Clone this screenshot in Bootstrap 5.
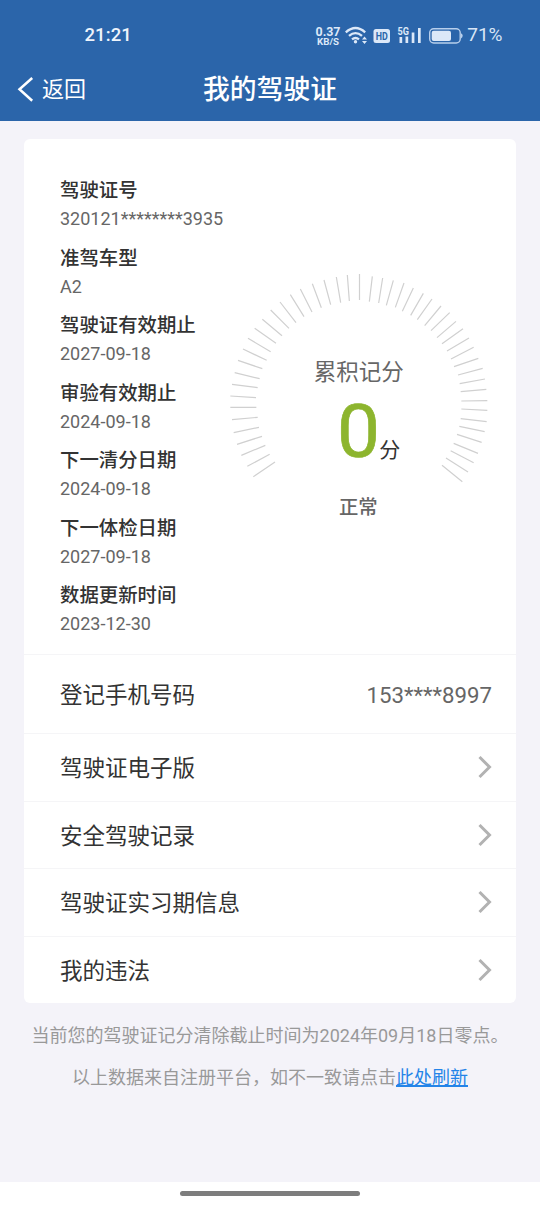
<!DOCTYPE html>
<html lang="zh-CN">
<head>
<meta charset="utf-8">
<meta name="viewport" content="width=device-width, initial-scale=1">
<title>我的驾驶证</title>
<link href="https://cdn.jsdelivr.net/npm/bootstrap@5.3.0/dist/css/bootstrap.min.css" rel="stylesheet">
<style>
  body { font-family: Roboto, "Noto Sans CJK SC", sans-serif; background: #f4f3f9; color: #333; height: 1206px; overflow: hidden; }
  svg { display: block; flex: none; }
  svg text { font-family: Roboto, "Noto Sans CJK SC", sans-serif; }
  .app-head { background: #2b65aa; height: 121px; }
  .status-row { height: 71px; padding-left: 84.5px; padding-right: 37.5px; color: #eef4fc; }
  .clock { font-size: 18.5px; font-weight: 500; letter-spacing: .1px; }
  .battery-pct { font-size: 19px; color: #d9e5f6; margin-left: 2px; }
  .title-row { height: 37px; display: grid; grid-template-columns: 1fr auto 1fr; align-items: center; padding-left: 17px; padding-right: 17px; }
  .back-link { font-size: 22px; line-height: 36px; gap: 8px; }
  .page-title { font-size: 26.8px; line-height: 36px; font-weight: 500; }
  .licence { margin: 18px 24px 0; border-radius: 6px; height: 864px; --bs-card-border-width: 0; overflow: hidden; }
  .overview { height: 515px; padding: 35px 16px 0 36px; }
  .facts { width: 170px; }
  .facts dt { font-size: 19.4px; line-height: 33px; height: 33px; font-weight: 500; white-space: nowrap; }
  .facts dd { font-size: 18px; line-height: 24px; height: 34.5px; color: #666; white-space: nowrap; }
  .gauge { margin-top: 86px; }
  .entry { height: 67.5px; padding: 4px 24px 0 36px; border-top: 1.5px solid #f5f5f7; font-size: 22.5px; }
  .entry svg { margin-top: -4px; }
  .entry-phone { height: 79px; }
  .phone-no { color: #666; font-size: 22.2px; margin-top: -1px; }
  .notes { color: #999; font-size: 18px; line-height: 30px; padding-top: 18px; }
  .notes p + p { margin-top: 12px; }
  .notes a { color: #2484e8; text-underline-offset: 1px; text-decoration-thickness: 1.5px; }
  .home-bar { height: 24px; background: #fff; }
  .home-bar span { width: 180px; height: 5px; background: #7d7d7d; margin-bottom: 2px; }
</style>
</head>
<body class="d-flex flex-column">
<header class="app-head text-white">
  <div class="status-row d-flex align-items-center">
    <span class="clock me-auto">21:21</span>
    <svg width="155" height="30" viewBox="310 20 155 30" fill="#dce8f8">
      <text x="315.5" y="34.6" font-size="12" font-weight="700" textLength="25" lengthAdjust="spacingAndGlyphs">0.37</text>
      <text x="317" y="44" font-size="9" font-weight="700" textLength="22" lengthAdjust="spacingAndGlyphs">KB/S</text>
      <g fill="none" stroke="#dce8f8" stroke-width="2.3">
        <path d="M345.8 31.3Q355.5 22.700 365.2 31.3"/>
        <path d="M349 34.900Q355.5 29.3 362 34.900"/>
        <path d="M352 38.4Q355.5 35.5 359 38.4"/>
      </g>
      <circle cx="355.5" cy="40.700" r="1.700"/>
      <path d="M362 38.500h5l-2.500-3zM362 40h5l-2.500 3z"/>
      <rect x="373.500" y="28" width="16.500" height="14" rx="2.500"/>
      <text x="375.800" y="39" font-size="11" font-weight="700" fill="#2b65aa" textLength="12" lengthAdjust="spacingAndGlyphs">HD</text>
      <text x="397.500" y="34" font-size="10.500" font-weight="700" textLength="11.500" lengthAdjust="spacingAndGlyphs">5G</text>
      <path d="M399.500 36h2.700v6h-2.700zM405.500 35.500h2.700v6.500h-2.700zM411.700 31.500h2.700v10.500h-2.700zM418 27h2.700v15h-2.700z"/>
      <rect x="429.700" y="27.700" width="30.500" height="14.300" rx="4" fill="none" stroke="#b8cfec" stroke-width="1.400"/>
      <rect x="431.700" y="29.700" width="19.300" height="10.300" rx="2"/>
      <path d="M461 32.200q1.700.8 1.700 2.600t-1.700 2.600z" fill="#b8cfec"/>
    </svg>
    <span class="battery-pct">71%</span>
  </div>
  <nav class="title-row">
    <a href="#" class="back-link d-flex align-items-center text-white text-decoration-none">
      <svg width="17" height="26" viewBox="0 0 17 26" fill="none" stroke="#fff" stroke-width="2.500"><path d="M15.200 1 2.500 12.300l12.700 11.500"/></svg>返回</a>
    <h1 class="page-title m-0">我的驾驶证</h1>
  </nav>
</header>

<main class="flex-grow-1">
  <section class="card licence">
    <div class="overview d-flex">
      <dl class="facts m-0">
        <dt>驾驶证号</dt><dd class="m-0">320121********3935</dd>
        <dt>准驾车型</dt><dd class="m-0">A2</dd>
        <dt>驾驶证有效期止</dt><dd class="m-0">2027-09-18</dd>
        <dt>审验有效期止</dt><dd class="m-0">2024-09-18</dd>
        <dt>下一清分日期</dt><dd class="m-0">2024-09-18</dd>
        <dt>下一体检日期</dt><dd class="m-0">2027-09-18</dd>
        <dt>数据更新时间</dt><dd class="m-0">2023-12-30</dd>
      </dl>
      <!-- Points gauge: a dial of short ticks round the score -->
      <svg class="gauge ms-auto" width="270" height="270" viewBox="30 0 810 810">
        <path fill="none" stroke="#d0d0d0" stroke-width="3.600" d="M100 650L165 606M82 619L149 583M64 586L136 556M51 553L126 529M41 518L117 502M36 479L113 472M31 442H109M31 408L108 413M36 373L113 383M44 338L119 356M54 301L127 326M69 267L140 301M84 235L152 275M104 205L168 250M127 178L186 227M152 150L207 205M180 126L228 188M211 104L252 170M241 87L276 156M277 71L304 143M312 60L332 134M349 51L362 128M382 45L388 123M418.500 42V120M457 49L448 125M488 54L476 129M520 61L499 136M552 69L526 142M580 84L547 154M610 100L572 166M636 117L592 179M663 138L614 197M689 158L633 212M708 184L651 233M729 206L666 251M747 234L681 273M761 262L693 297M775 295L702 320M788 325L714 345M795 357L719 371M799 388L722 395M802 422L724 423M802 451L724 447M800 485L722 476M794 515L718 499M785 547L711 523M774 580L701 550M761 608L692 572M744 636L678 594M727 665L666 616"/>
        <text x="281" y="361" font-size="67.500" fill="#666">累积记分</text>
        <text x="351" y="591" font-size="222" fill="#8db52e" stroke="#8db52e" stroke-width="2" textLength="129" lengthAdjust="spacingAndGlyphs">0</text>
        <text x="478" y="592" font-size="63" fill="#333">分</text>
        <text x="357" y="761" font-size="58" font-weight="500" fill="#666">正常</text>
      </svg>
    </div>
    <div class="entry entry-phone d-flex align-items-center justify-content-between"><span>登记手机号码</span><span class="phone-no">153****8997</span></div>
    <div class="entry d-flex align-items-center justify-content-between"><span>驾驶证电子版</span><svg width="14" height="24" viewBox="0 0 14 24" fill="none" stroke="#b2b2b2" stroke-width="3"><path d="M1.500 2 11.500 12 1.500 22"/></svg></div>
    <div class="entry d-flex align-items-center justify-content-between"><span>安全驾驶记录</span><svg width="14" height="24" viewBox="0 0 14 24" fill="none" stroke="#b2b2b2" stroke-width="3"><path d="M1.500 2 11.500 12 1.500 22"/></svg></div>
    <div class="entry d-flex align-items-center justify-content-between"><span>驾驶证实习期信息</span><svg width="14" height="24" viewBox="0 0 14 24" fill="none" stroke="#b2b2b2" stroke-width="3"><path d="M1.500 2 11.500 12 1.500 22"/></svg></div>
    <div class="entry d-flex align-items-center justify-content-between"><span>我的违法</span><svg width="14" height="24" viewBox="0 0 14 24" fill="none" stroke="#b2b2b2" stroke-width="3"><path d="M1.500 2 11.500 12 1.500 22"/></svg></div>
  </section>
  <div class="notes text-center text-nowrap">
    <p class="mb-0">当前您的驾驶证记分清除截止时间为2024年09月18日零点。</p>
    <p class="mb-0">以上数据来自注册平台，如不一致请点击<a href="#">此处刷新</a></p>
  </div>
</main>
<footer class="home-bar d-flex justify-content-center align-items-center"><span class="rounded-pill"></span></footer>
<script src="https://cdn.jsdelivr.net/npm/bootstrap@5.3.0/dist/js/bootstrap.bundle.min.js"></script>
</body>
</html>
